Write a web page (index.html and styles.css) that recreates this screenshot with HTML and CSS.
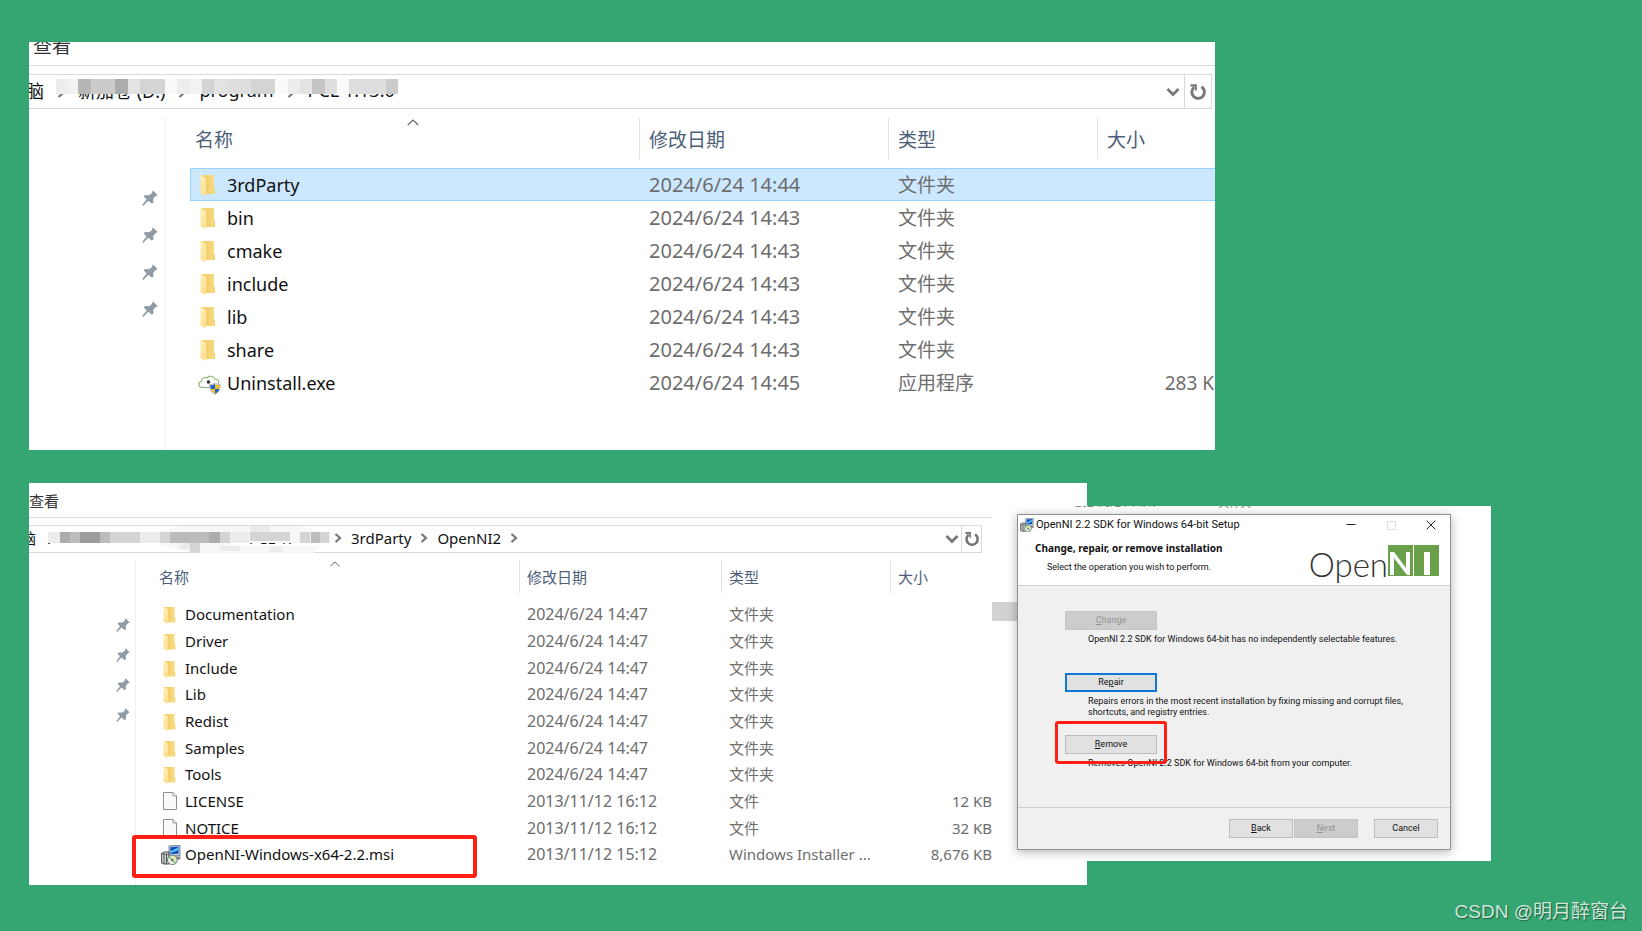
FILE: index.html
```html
<!DOCTYPE html>
<html lang="zh-CN">
<head>
<meta charset="utf-8">
<title>OpenNI2</title>
<link rel="stylesheet" href="styles.css">
</head>
<body>
<svg class="defs" aria-hidden="true">
  <defs>
    <linearGradient id="fold-back" x1="0" y1="0" x2="1" y2="0"><stop offset="0" stop-color="#efc963"/><stop offset="1" stop-color="#f8db82"/></linearGradient>
    <linearGradient id="fold-front" x1="0" y1="0" x2="0" y2="1"><stop offset="0" stop-color="#ffedb5"/><stop offset="1" stop-color="#fde08f"/></linearGradient>
  </defs>
  <symbol id="folder" viewBox="0 0 16 22">
    <path d="M1 1h13v13l1 1v5H5z" fill="#f8dc86"/>
    <path d="M3 1.500L14 1v19H5z" fill="url(#fold-back)"/>
    <path d="M13 13.500h1.500l.5 1V20h-2z" fill="#f5d376"/>
    <path d="M.5 1L6 4v16.500L5 22 .5 19z" fill="url(#fold-front)"/>
  </symbol>
  <symbol id="file" viewBox="0 0 14 18">
    <path d="M.5.5h9.500l3.500 3.500v13.500H.5z" fill="#fafafa" stroke="#8f8f8f"/>
    <path d="M10 .5V4h3.500" fill="#fff" stroke="#8f8f8f"/>
  </symbol>
  <symbol id="pin" viewBox="0 0 16 16">
    <path d="M10.800.2L15.800 5.200l-1.800.6-2.800 3 .3 4-1.800.8L6.300 10.800 1.200 15.900.2 15 4.600 9.400 1.800 6.600l1.200-1.600 4.200.2L10 3z" fill="#8f9ba5"/>
  </symbol>
  <symbol id="down" viewBox="0 0 14 10"><path d="M1.500 2L7 7.500 12.500 2" fill="none" stroke="#777" stroke-width="2.800"/></symbol>
  <symbol id="right" viewBox="0 0 8 10"><path d="M1.500 1L6 5 1.500 9" fill="none" stroke="#777" stroke-width="2.200"/></symbol>
  <symbol id="up" viewBox="0 0 12 7"><path d="M.7 6L6 1l5.300 5" fill="none" stroke="#666" stroke-width="1.200"/></symbol>
  <symbol id="refresh" viewBox="0 0 18 18">
    <path d="M5.200 4.200A6.300 6.300 0 1 0 12.500 3.800" fill="none" stroke="#777" stroke-width="2.900"/>
    <path d="M1.500 1.200h6.300v6.300H6.200L5.700 3.500H1.500z" fill="#777"/>
  </symbol>
  <symbol id="msi" viewBox="0 0 20 20">
    <path d="M8 1l11-1v10.500L8 11.500z" fill="#c6d2dc" stroke="#4a5a6c" stroke-width=".7"/>
    <path d="M9.500 2.200l8-.7v7l-8 .8z" fill="#0d47c0"/>
    <path d="M9.800 6l7.400-3.700v2.900L9.800 8.500z" fill="#4fb9fa"/>
    <path d="M13 11.500h6.500v2.500l-4 1.500z" fill="#7d8890"/>
    <path d="M.6 8.500L3 7h5v12H3L.6 18z" fill="#d4d4d4" stroke="#3c3c3c" stroke-width=".9"/>
    <path d="M3 9v10M.6 8.500L3 9.200h5M5.500 9.200V19" fill="none" stroke="#444" stroke-width=".9"/>
    <ellipse cx="11.300" cy="15" rx="4.900" ry="4.700" fill="#e4ebe0" stroke="#6a7672" stroke-width=".9"/>
    <path d="M11.300 15l-4-2 2-2zM11.300 15l4 2-2 2z" fill="#8fc885"/>
    <path d="M11.300 15l1-4 3 2z" fill="#ede27a"/>
    <circle cx="11.300" cy="15" r="1.200" fill="#59645f"/>
  </symbol>
  <symbol id="uninstall" viewBox="0 0 23 21">
    <path d="M4 13.500C0 13 0 8 3.500 7.500 3.500 3.500 7 2.500 9 4c2-3 7-2 7.500 1 3-.5 5 2 4 4.500 1 2-.5 4-3 4z" fill="#fff" stroke="#92b878" stroke-width="1.100"/>
    <circle cx="10.500" cy="8" r="1.800" fill="#333"/>
    <path d="M11.500 10.500c2 0 4-.6 5.500-1.500 1.500.9 3.500 1.500 5.500 1.500 0 4.500-1.500 8-5.500 10-4-2-5.500-5.500-5.500-10z" fill="#d8d8d8" stroke="#888" stroke-width=".4"/>
    <path d="M12.200 11.200c1.900 0 3.400-.4 4.800-1.200v5h-4.300z" fill="#1d66c4"/>
    <path d="M17 10c1.400.8 2.900 1.200 4.800 1.200l-.5 3.800H17z" fill="#f6bd26"/>
    <path d="M12.700 15H17v4.800c-2.500-1.200-3.700-2.800-4.300-4.800z" fill="#f6bd26"/>
    <path d="M17 15h4.300c-.6 2-1.800 3.600-4.300 4.800z" fill="#1d66c4"/>
  </symbol>
</svg>

<main class="board">
  <section class="explorer large">
    <div class="menu">查看</div>
    <div class="address">
      <nav class="crumbs">
        <span class="pc">脑</span><svg class="sep"><use href="#right"/></svg>
        <span>新加卷 (D:)</span><svg class="sep"><use href="#right"/></svg>
        <span>program</span><svg class="sep"><use href="#right"/></svg>
        <span>PCL 1.13.0</span>
      </nav>
      <svg class="mosaic" viewBox="0 0 350 15" shape-rendering="crispEdges" aria-hidden="true">
        <path fill="#fafafa" d="M0 0h343v15H0z"/>
        <path fill="#ededed" d="M0 0h11v15H0zM121 0h13v15h-13zM232 0h12v15h-12z"/>
        <path fill="#f2f2f2" d="M11 0h11v15H11zM134 0h12v15h-12z"/>
        <path fill="#b6b6b6" d="M22 0h13v15H22z"/>
        <path fill="#cbcbcb" d="M35 0h12v15H35zM47 0h12v15H47zM330 0h12v15h-12z"/>
        <path fill="#acacac" d="M59 0h13v15H59z"/>
        <path fill="#e3e3e3" d="M72 0h12v15H72zM158 0h13v15h-13zM244 0h12v15h-12z"/>
        <path fill="#d4d4d4" d="M84 0h25v15H84zM146 0h12v15h-12zM195 0h24v15h-24z"/>
        <path fill="#dedede" d="M171 0h24v15h-24zM269 0h12v15h-12zM293 0h37v15h-37z"/>
        <path fill="#c4c4c4" d="M256 0h13v15h-13z"/>
      </svg>
      <button class="drop" aria-label="以前的位置"><svg><use href="#down"/></svg></button>
      <button class="reload" aria-label="刷新"><svg><use href="#refresh"/></svg></button>
    </div>
    <div class="content">
      <aside class="pins">
        <svg><use href="#pin"/></svg><svg><use href="#pin"/></svg><svg><use href="#pin"/></svg><svg><use href="#pin"/></svg>
      </aside>
      <div class="listing">
        <svg class="sort"><use href="#up"/></svg>
        <table class="files">
          <colgroup><col><col class="c-date"><col class="c-type"><col class="c-size"></colgroup>
          <thead><tr><th>名称</th><th>修改日期</th><th>类型</th><th>大小</th></tr></thead>
          <tbody>
            <tr class="selected"><td><svg class="i-folder"><use href="#folder"/></svg>3rdParty</td><td class="date">2024/6/24 14:44</td><td>文件夹</td><td></td></tr>
            <tr><td><svg class="i-folder"><use href="#folder"/></svg>bin</td><td class="date">2024/6/24 14:43</td><td>文件夹</td><td></td></tr>
            <tr><td><svg class="i-folder"><use href="#folder"/></svg>cmake</td><td class="date">2024/6/24 14:43</td><td>文件夹</td><td></td></tr>
            <tr><td><svg class="i-folder"><use href="#folder"/></svg>include</td><td class="date">2024/6/24 14:43</td><td>文件夹</td><td></td></tr>
            <tr><td><svg class="i-folder"><use href="#folder"/></svg>lib</td><td class="date">2024/6/24 14:43</td><td>文件夹</td><td></td></tr>
            <tr><td><svg class="i-folder"><use href="#folder"/></svg>share</td><td class="date">2024/6/24 14:43</td><td>文件夹</td><td></td></tr>
            <tr><td><svg class="i-app"><use href="#uninstall"/></svg>Uninstall.exe</td><td class="date">2024/6/24 14:45</td><td>应用程序</td><td class="size">283 K</td></tr>
          </tbody>
        </table>
      </div>
    </div>
  </section>

  <section class="explorer small">
    <div class="pane">
      <div class="menu">查看</div>
      <div class="address">
        <nav class="crumbs">
          <span class="pc">脑</span>
          <span class="colon">:</span>
          <span class="hidden-path">PCL 1.</span>
          <svg class="sep"><use href="#right"/></svg><span>3rdParty</span>
          <svg class="sep"><use href="#right"/></svg><span>OpenNI2</span>
          <svg class="sep"><use href="#right"/></svg>
        </nav>
        <svg class="mosaic" viewBox="0 0 290 27" shape-rendering="crispEdges" aria-hidden="true">
          <path fill="#f7f7f7" d="M112 5l20-5h120l20 6 16 7-7 4H112z"/>
          <path fill="#f7f7f7" d="M112 17h70v10h-36l-18-4-16-5zM182 20h90l-6 7h-84z"/>
          <path fill="#ececec" d="M0 6h12v11H0zM92 6h20v11H92zM182 6h19v11h-19zM252 6h30v11h-30z"/>
          <path fill="#adadad" d="M12 6h10v11H12zM161 6h11v11h-11z"/>
          <path fill="#9c9c9c" d="M32 6h20v11H32z"/>
          <path fill="#bcbcbc" d="M22 6h10v11H22zM52 6h10v11H52zM122 6h39v11h-39zM263 6h9v11h-9z"/>
          <path fill="#d4d4d4" d="M62 6h30v11H62zM112 6h10v11h-10zM172 6h10v11h-10zM202 6h40v9h-40zM252 6h10v11h-10zM272 6h9v11h-9zM142 17h10v10h-10z"/>
          <path fill="#ebebeb" d="M202 0h20v6h-20zM132 17h10v6h-10zM172 20h20v5h-20zM222 20h12v6h-12z"/>
        </svg>
        <button class="drop" aria-label="以前的位置"><svg><use href="#down"/></svg></button>
        <button class="reload" aria-label="刷新"><svg><use href="#refresh"/></svg></button>
      </div>
      <div class="content">
        <aside class="pins">
          <svg><use href="#pin"/></svg><svg><use href="#pin"/></svg><svg><use href="#pin"/></svg><svg><use href="#pin"/></svg>
        </aside>
        <div class="listing">
          <svg class="sort"><use href="#up"/></svg>
          <table class="files">
            <colgroup><col><col class="c-date"><col class="c-type"><col class="c-size"></colgroup>
            <thead><tr><th>名称</th><th>修改日期</th><th>类型</th><th>大小</th></tr></thead>
            <tbody>
              <tr><td><svg class="i-folder"><use href="#folder"/></svg>Documentation</td><td class="date">2024/6/24 14:47</td><td>文件夹</td><td></td></tr>
              <tr><td><svg class="i-folder"><use href="#folder"/></svg>Driver</td><td class="date">2024/6/24 14:47</td><td>文件夹</td><td></td></tr>
              <tr><td><svg class="i-folder"><use href="#folder"/></svg>Include</td><td class="date">2024/6/24 14:47</td><td>文件夹</td><td></td></tr>
              <tr><td><svg class="i-folder"><use href="#folder"/></svg>Lib</td><td class="date">2024/6/24 14:47</td><td>文件夹</td><td></td></tr>
              <tr><td><svg class="i-folder"><use href="#folder"/></svg>Redist</td><td class="date">2024/6/24 14:47</td><td>文件夹</td><td></td></tr>
              <tr><td><svg class="i-folder"><use href="#folder"/></svg>Samples</td><td class="date">2024/6/24 14:47</td><td>文件夹</td><td></td></tr>
              <tr><td><svg class="i-folder"><use href="#folder"/></svg>Tools</td><td class="date">2024/6/24 14:47</td><td>文件夹</td><td></td></tr>
              <tr><td><svg class="i-file"><use href="#file"/></svg>LICENSE</td><td class="date">2013/11/12 16:12</td><td>文件</td><td class="size">12 KB</td></tr>
              <tr><td><svg class="i-file"><use href="#file"/></svg>NOTICE</td><td class="date">2013/11/12 16:12</td><td>文件</td><td class="size">32 KB</td></tr>
              <tr><td><svg class="i-app"><use href="#msi"/></svg>OpenNI-Windows-x64-2.2.msi</td><td class="date">2013/11/12 15:12</td><td>Windows Installer ...</td><td class="size">8,676 KB</td></tr>
            </tbody>
          </table>
          <div class="mark mark-file"></div>
        </div>
      </div>
    </div>
  </section>

  <section class="setup-shot">
    <div class="behind"><span>2024/6/24 14:47</span><span>文件夹</span></div>
    <div class="behind-bar"></div>
    <div class="dialog">
      <header class="titlebar">
        <svg class="app-icon"><use href="#msi"/></svg>
        <span class="title">OpenNI 2.2 SDK for Windows 64-bit Setup</span>
        <button aria-label="最小化"><svg viewBox="0 0 10 10"><path d="M.5 4.500h9" stroke="#222" fill="none"/></svg></button>
        <button aria-label="最大化" disabled><svg viewBox="0 0 10 10"><path d="M1.500 1.500h8v8h-8z" stroke="#ddd" fill="none"/></svg></button>
        <button aria-label="关闭"><svg viewBox="0 0 10 10"><path d="M.7.7l8.600 8.600M9.300.7L.7 9.300" stroke="#222" fill="none"/></svg></button>
      </header>
      <div class="banner">
        <div>
          <h1>Change, repair, or remove installation</h1>
          <p>Select the operation you wish to perform.</p>
        </div>
        <div class="logo">
          <span>Open</span>
          <svg viewBox="0 0 52 31" aria-label="NI">
            <path d="M0 0h25v31H0z" fill="#6aa04a"/>
            <path d="M2 30V7h4l12 16V7h4v23h-3L6 13v17z" fill="#fff"/>
            <path d="M26 0h25v31H26z" fill="#6aa04a"/>
            <path d="M36 7h6v23h-6z" fill="#fff"/>
          </svg>
        </div>
      </div>
      <div class="choices">
        <div class="choice"><button disabled><u>C</u>hange</button><p>OpenNI 2.2 SDK for Windows 64-bit has no independently selectable features.</p></div>
        <div class="choice"><button class="default">Re<u>p</u>air</button><p>Repairs errors in the most recent installation by fixing missing and corrupt files, shortcuts, and registry entries.</p></div>
        <div class="choice"><button><u>R</u>emove</button><p>Removes OpenNI 2.2 SDK for Windows 64-bit from your computer.</p><div class="mark mark-remove"></div></div>
      </div>
      <footer class="actions">
        <button><u>B</u>ack</button><button disabled><u>N</u>ext</button><button class="cancel">Cancel</button>
      </footer>
    </div>
  </section>
</main>
<div class="watermark">CSDN @明月醉窗台</div>
</body>
</html>
```

FILE: styles.css
```css
* { box-sizing: border-box; }

body {
  margin: 0;
  min-height: 100vh;
  background: #35a571;
  font-family: "Noto Sans", "Noto Sans CJK SC", sans-serif;
  color: #111;
  position: relative;
}

button { font: inherit; color: inherit; padding: 0; margin: 0; border: 0; background: none; }
svg { display: block; }
.defs { position: absolute; width: 0; height: 0; }

.board {
  display: grid;
  grid-template-columns: 963fr 95fr 128fr 276fr;
  row-gap: 33px;
  padding: 42px 151px 46px 29px;
}

/* Explorer windows */
.explorer { background: #fff; overflow: hidden; display: flex; flex-direction: column; }
.large { grid-column: 1 / 4; grid-row: 1; height: 408px; font-size: 18px; }
.small { grid-column: 1 / 3; grid-row: 2; height: 402px; font-size: 15px; display: grid; grid-template-columns: 963fr 95fr; }
.pane { display: flex; flex-direction: column; min-width: 0; }

.menu { border-bottom: 1px solid #dcdcdc; color: #333; flex: none; }
.large .menu { height: 24px; padding-left: 4px; line-height: 8px; font-size: 19px; }
.small .menu { height: 35px; line-height: 36px; }

.address {
  position: relative;
  display: flex;
  flex: none;
  border: 1px solid #d9d9d9;
  border-left: 0;
}
.large .address { height: 35px; margin: 8px 3px 0 0; }
.small .address { height: 28px; margin: 7px 10px 0 0; }
.crumbs { flex: 1; display: flex; align-items: center; white-space: nowrap; padding-bottom: 3px; }
.pc { flex: none; }
.large .pc { margin-left: -3px; }
.small .pc { margin-left: -8px; }
.sep { flex: none; width: 8px; height: 10px; }
.large .sep { margin: 5px 13px 0 13px; }
.small .sep { margin: 0 9px; }
.colon { width: 6px; margin-left: 11px; }
.hidden-path { margin-left: 196px; }
.small .hidden-path + .sep { margin-left: 42px; }
.mosaic { position: absolute; }
.large .mosaic { left: 27px; top: 4px; width: 350px; height: 15px; }
.small .mosaic { left: 19px; top: 0; width: 290px; height: 27px; }
.drop, .reload { display: flex; align-items: center; justify-content: center; }
.drop svg { width: 14px; height: 10px; }
.reload { border-left: 1px solid #d9d9d9; }
.large .drop { width: 22px; }
.large .reload { width: 27px; }
.small .drop { width: 18px; }
.small .reload { width: 20px; }
.reload svg { width: 18px; height: 18px; }
.small .reload svg { width: 16px; height: 16px; }

.content { display: flex; flex: 1; }
.large .content { margin-top: 9px; }
.small .content { margin-top: 7px; }
.pins { flex: none; display: flex; flex-direction: column; align-items: flex-end; border-right: 1px solid #f0f0f0; }
.large .pins { width: 137px; padding: 72px 7px 0 0; gap: 21px; }
.small .pins { width: 107px; padding: 58px 5px 0 0; gap: 16px; }
.pins svg { width: 16px; height: 16px; }
.small .pins svg { width: 14px; height: 14px; }

.listing { position: relative; flex: 1; min-width: 0; }
.large .listing { padding-left: 24px; }
.sort { position: absolute; width: 12px; height: 7px; }
.large .sort { left: 241px; top: 1px; }
.small .sort { left: 194px; top: 1px; width: 10px; height: 6px; }

.files { width: 100%; table-layout: fixed; border-collapse: separate; border-spacing: 0; }
.files th { text-align: left; font-weight: 400; color: #4c607a; padding: 0 0 0 9px; }
.files th + th { border-left: 1px solid #e3e3e3; }
.files td { padding: 0 0 0 10px; color: #6d6d6d; white-space: nowrap; overflow: visible; }
.files td:first-child { color: #111; }
.files td svg { float: left; }
.files .size { text-align: right; padding: 0; }

.large .c-date { width: 249px; }
.large .c-type { width: 209px; }
.large .c-size { width: 118px; }
.large th, .large td { font-size: 19px; }
.large td:first-child { font-size: 18px; }
.large th { height: 41px; }
.large th:first-child { padding-left: 5px; }
.large tbody::before { content: ""; display: block; height: 9px; }
.large td { height: 33px; line-height: 30px; border: 0 solid #99d1ff; }
.large .date { font-size: 20px; }
.large .size { padding-right: 1px; }
.selected td { background: #cce8ff; border-width: 1px 0; }
.selected td:first-child { border-left-width: 1px; padding-left: 9px; }
.large .i-folder { width: 16px; height: 22px; margin: 4px 11px 0 0; }
.large .i-app { width: 23px; height: 21px; margin: 6px 6px 0 -2px; }

.small .c-date { width: 202px; }
.small .c-type { width: 169px; }
.small .c-size { width: 102px; }
.small th { height: 33px; padding-left: 7px; }
.small th:first-child { padding-left: 23px; }
.small tbody::before { content: ""; display: block; height: 8px; }
.small td { height: 27px; line-height: 25px; padding-left: 8px; }
.small tr:nth-child(3n) td { height: 26px; }
.small td:first-child { padding-left: 27px; }
.small .date { font-size: 16px; }
.small .size { padding-left: 0; }
.small .i-folder { width: 13px; height: 18px; margin: 4px 9px 0 0; }
.small .i-file { width: 14px; height: 18px; margin: 3px 8px 0 0; }
.small .i-app { width: 20px; height: 20px; margin: 3px 4px 0 -2px; }

/* Red highlight boxes */
.mark { position: absolute; border: 3px solid #ff1f14; border-radius: 3px; pointer-events: none; }
.mark-file { left: -4px; top: 275px; width: 345px; height: 43px; border-width: 4px; }
.mark-remove { left: -10px; top: -14px; width: 112px; height: 43px; }

/* Setup dialog */
.setup-shot {
  position: relative;
  grid-column: 2 / 5;
  grid-row: 2;
  margin-top: 23px;
  height: 355px;
  background: #fff;
  overflow: hidden;
  padding: 8px 40px 11px 25px;
}
.behind { position: absolute; left: 83px; top: -11px; display: flex; gap: 60px; font-size: 11px; line-height: 16px; color: #888; }
.behind-bar { position: absolute; left: 0; top: 96px; width: 25px; height: 19px; background: #d2d2d2; }
.dialog {
  position: relative;
  height: 100%;
  display: flex;
  flex-direction: column;
  background: #f0f0f0;
  border: 1px solid #909090;
  box-shadow: 0 2px 10px rgba(0, 0, 0, .3);
  font-family: Roboto, "Noto Sans", sans-serif;
  font-size: 9px;
  line-height: 11px;
}
.dialog p, .dialog h1 { margin: 0; }
.titlebar { display: flex; align-items: center; height: 19px; flex: none; padding: 0 14px 0 2px; background: #fff; }
.app-icon { width: 14px; height: 14px; }
.title { flex: 1; margin-left: 2px; font-size: 11px; white-space: nowrap; }
.titlebar button { width: 10px; height: 10px; margin-left: 30px; }
.titlebar button svg { width: 10px; height: 10px; }
.banner { display: flex; justify-content: space-between; height: 52px; flex: none; padding: 8px 10px 0 17px; background: #fff; border-bottom: 1px solid #cfcfcf; }
.banner h1 { font-family: "Noto Sans", sans-serif; font-size: 10px; line-height: 12px; white-space: nowrap; }
.banner p { margin: 8px 0 0 12px; }
.logo { display: flex; align-items: flex-start; margin-top: 3px; }
.logo span { font-family: Lato, sans-serif; font-weight: 300; font-size: 33px; line-height: 38px; color: #333; }
.logo svg { width: 52px; height: 31px; }
.choices { flex: 1; padding: 25px 30px 0 47px; }
.choice { position: relative; height: 62px; }
.dialog .choice button { width: 92px; height: 19px; }
.choice p { margin: 4px 0 0 23px; }
.choice button, .actions button { display: block; background: #e1e1e1; border: 1px solid #bdbdbd; }
.choice button:disabled, .actions button:disabled { background: #ccc; border-color: #c4c4c4; color: #949494; }
.choice .default { border: 2px solid #0f78d4; }
.actions { display: flex; flex: none; height: 42px; padding: 11px 12px 0 0; justify-content: flex-end; border-top: 1px solid #cfcfcf; gap: 1px; }
.actions button { width: 64px; height: 19px; }
.actions .cancel { margin-left: 15px; }

.watermark {
  position: absolute;
  right: 14px;
  bottom: 5px;
  font-family: "Liberation Sans", "Noto Sans CJK SC", sans-serif;
  font-size: 19px;
  line-height: 28px;
  color: #cfe6da;
  text-shadow: 1px 1px 1px #1d5c3f;
}
```
